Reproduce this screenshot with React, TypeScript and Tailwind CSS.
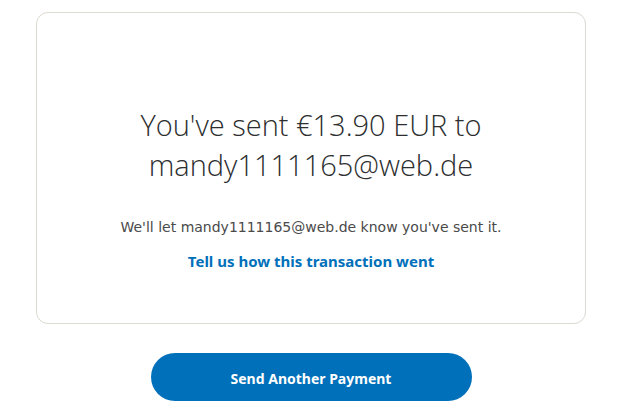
export default function App() {
  return (
    <div className="min-h-[401px] bg-white pt-3 font-['Noto_Sans',sans-serif]">
      <div className="ml-9 w-[550px] h-[312px] rounded-xl border border-[#dcd9cf] flex flex-col items-center pt-[92px]">
        <h1 className="text-center text-[29px] leading-[40px] font-light text-[#2c2e2f] font-['Open_Sans',sans-serif]">
          You've sent €13.90 EUR to
          <br />
          mandy1111165@web.de
        </h1>
        <p className="mt-[32px] text-[14px] text-[#4a4a4a] font-['DejaVu_Sans',sans-serif]">
          We'll let mandy1111165@web.de know you've sent it.
        </p>
        <a className="mt-[12px] text-[15px] font-bold text-[#0070ba]" href="#">
          Tell us how this transaction went
        </a>
      </div>
      <div className="flex justify-center mt-[29px] pr-[3px]">
        <button className="w-[321px] h-12 rounded-full bg-[#0070ba] text-white text-[14px] font-bold pt-[3px]">
          Send Another Payment
        </button>
      </div>
    </div>
  );
}
